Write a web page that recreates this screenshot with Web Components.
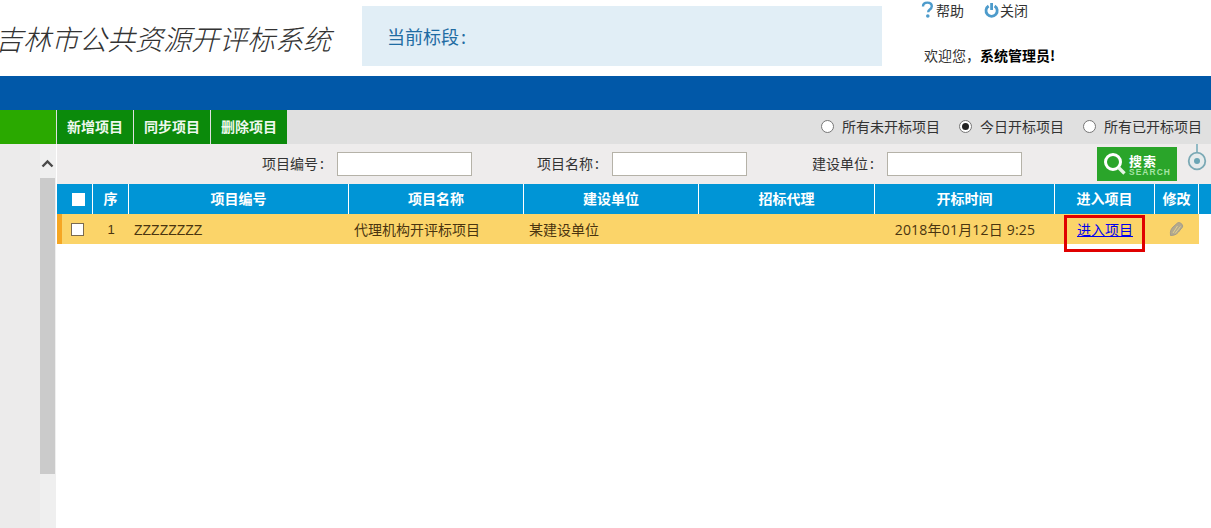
<!DOCTYPE html>
<html lang="zh">
<head>
<meta charset="utf-8">
<title>吉林市公共资源开评标系统</title>
<style>
    html, body {
        margin: 0;
        height: 100%;
        overflow: hidden;
        background: #fff;
        font-family: "Noto Sans CJK SC", sans-serif;
        font-size: 14px;
        color: #333;
    }
    body {
        display: flex;
        flex-direction: column;
    }
</style>
</head>
<body>
<app-header></app-header>
<tool-bar></tool-bar>
<work-area>
    <side-rail slot="rail"></side-rail>
    <search-bar></search-bar>
    <project-grid></project-grid>
</work-area>

<script>
class AppHeader extends HTMLElement {
    constructor() {
        super();
        this.attachShadow({ mode: 'open' });
        this.shadowRoot.innerHTML = `
            <style>
                :host { display: block; flex: none; }
                .top {
                    display: flex;
                    height: 76px;
                    background: #fff;
                }
                .title {
                    width: 362px;
                    flex: none;
                    margin-left: -5px;
                    font-size: 28px;
                    font-style: italic;
                    font-weight: 300;
                    line-height: 76px;
                    color: #333;
                    white-space: nowrap;
                }
                .current {
                    width: 520px;
                    height: 60px;
                    margin: 6px 0 0 5px;
                    padding-left: 25px;
                    box-sizing: border-box;
                    background: #e1eef6;
                    color: #1f6ca3;
                    font-size: 18px;
                    line-height: 60px;
                }
                .current s { text-decoration: none; margin-left: 2px; }
                .user {
                    margin-left: 42px;
                    font-size: 14px;
                    color: #333;
                }
                .links {
                    display: flex;
                    gap: 20px;
                    height: 22px;
                    align-items: center;
                    margin: -1px 0 23px -4px;
                }
                .links span {
                    display: flex;
                    align-items: center;
                }
                .welcome { line-height: 22px; }
                .welcome b { color: #000; }
                .bar { height: 34px; background: #0158a8; }
            </style>
            <div class="top">
                <div class="title">吉林市公共资源开评标系统</div>
                <div class="current">当前标段<s>:</s></div>
                <div class="user">
                    <div class="links">
                        <span>
                            <svg width="16" height="18" viewBox="0 0 16 18"><path d="M3 5.500C3 3 5 1.600 7.400 1.600c2.600 0 4.400 1.500 4.400 3.700 0 1.700-1 2.500-2.200 3.400-1 .8-1.400 1.300-1.400 2.600" fill="none" stroke="#4d9bcb" stroke-width="2.400"/><circle cx="7.800" cy="15" r="1.800" fill="#4d9bcb"/></svg>
                            <span>帮助</span>
                        </span>
                        <span>
                            <svg width="16" height="16" viewBox="0 0 16 16"><path d="M4.600 4a5.600 5.600 0 1 0 6 0" fill="none" stroke="#4d9bcb" stroke-width="2.800"/><path d="M7.600 1v7" stroke="#4d9bcb" stroke-width="2.800"/></svg>
                            <span>关闭</span>
                        </span>
                    </div>
                    <div class="welcome">欢迎您，<b>系统管理员!</b></div>
                </div>
            </div>
            <div class="bar"></div>
        `;
    }
}

class ToolBar extends HTMLElement {
    constructor() {
        super();
        this.attachShadow({ mode: 'open' });
        this.shadowRoot.innerHTML = `
            <style>
                :host {
                    display: flex;
                    flex: none;
                    height: 34px;
                    background: #e0e0e0;
                    align-items: stretch;
                }
                .lead { width: 56px; background: #2aa900; margin-right: 1px; }
                button {
                    width: 76px;
                    margin: 0 1px 0 0;
                    padding: 0 0 2px;
                    border: none;
                    background: #0b8a0b;
                    color: #eef8ee;
                    font: bold 14px "Noto Sans CJK SC", sans-serif;
                }
                button:nth-of-type(3) { margin-right: 0; }
                .filters {
                    margin-left: auto;
                    padding: 0 9px 2px 0;
                    display: flex;
                    align-items: center;
                    gap: 19px;
                    font-size: 14px;
                    color: #333;
                }
                label { display: flex; align-items: center; gap: 8px; }
                i {
                    width: 11px;
                    height: 11px;
                    border: 1px solid #767676;
                    border-radius: 50%;
                    background: #fff;
                    display: block;
                    position: relative;
                }
                i.on::after {
                    content: "";
                    position: absolute;
                    inset: 2px;
                    border-radius: 50%;
                    background: #222;
                }
            </style>
            <div class="lead"></div>
            <button>新增项目</button>
            <button>同步项目</button>
            <button>删除项目</button>
            <div class="filters">
                <label><i></i>所有未开标项目</label>
                <label><i class="on"></i>今日开标项目</label>
                <label><i></i>所有已开标项目</label>
            </div>
        `;
    }
}

class WorkArea extends HTMLElement {
    constructor() {
        super();
        this.attachShadow({ mode: 'open' });
        this.shadowRoot.innerHTML = `
            <style>
                :host {
                    display: flex;
                    flex: 1;
                    min-height: 0;
                }
                main { flex: 1; min-width: 0; }
            </style>
            <slot name="rail"></slot>
            <main><slot></slot></main>
        `;
    }
}

class SideRail extends HTMLElement {
    constructor() {
        super();
        this.attachShadow({ mode: 'open' });
        this.shadowRoot.innerHTML = `
            <style>
                :host {
                    display: flex;
                    justify-content: flex-end;
                    width: 56px;
                    margin-right: 1px;
                    height: 100%;
                    background: #ecebeb;
                }
                .track {
                    width: 16px;
                    background: #efefef;
                    display: flex;
                    flex-direction: column;
                    align-items: flex-start;
                }
                svg { display: block; margin: 15px 0 10px 1px; }
                .thumb { width: 15px; height: 296px; background: #cbcbcb; }
            </style>
            <div class="track">
                <svg width="13" height="9" viewBox="0 0 13 9"><path d="M1.500 7.500l5-5 5 5" fill="none" stroke="#4a4a4a" stroke-width="2.400"/></svg>
                <div class="thumb"></div>
            </div>
        `;
    }
}

class SearchBar extends HTMLElement {
    constructor() {
        super();
        this.attachShadow({ mode: 'open' });
        this.shadowRoot.innerHTML = `
            <style>
                :host {
                    display: flex;
                    align-items: center;
                    height: 40px;
                    background: #eeecec;
                    color: #333;
                    font-size: 14px;
                    position: relative;
                }
                label { display: flex; align-items: center; white-space: nowrap; }
                label:nth-of-type(1) { margin-left: 205px; }
                label:nth-of-type(2) { margin-left: 65px; }
                label:nth-of-type(3) { margin-left: 65px; }
                span { width: 75px; flex: none; padding-bottom: 2px; }
                s { text-decoration: none; margin-left: 2px; }
                input {
                    width: 135px;
                    height: 24px;
                    box-sizing: border-box;
                    margin: 0;
                    border: 1px solid #b5b2a8;
                    background: #fff;
                    outline: none;
                }
                button {
                    width: 80px;
                    height: 34px;
                    margin-left: 75px;
                    padding: 0;
                    border: none;
                    background: #2aa52a;
                    color: #fff;
                    display: flex;
                    align-items: center;
                    font-family: "Noto Sans CJK SC", sans-serif;
                }
                button svg { margin-left: 6px; flex: none; }
                .words {
                    margin-left: 2px;
                    padding-top: 2px;
                    display: flex;
                    flex-direction: column;
                    align-items: flex-start;
                }
                .cn { font-size: 13px; font-weight: bold; line-height: 13px; letter-spacing: 1px; padding-bottom: 1px; }
                .en {
                    font: bold 8.400px "Liberation Sans", sans-serif;
                    letter-spacing: 1.100px;
                    line-height: 8px;
                    color: #a6e6a6;
                }
                .pin { position: absolute; right: 4px; top: 0; display: block; }
            </style>
            <label><span>项目编号<s>:</s></span><input type="text"></label>
            <label><span>项目名称<s>:</s></span><input type="text"></label>
            <label><span>建设单位<s>:</s></span><input type="text"></label>
            <button>
                <svg width="24" height="24" viewBox="0 0 24 24"><circle cx="10" cy="10" r="7.500" fill="none" stroke="#fff" stroke-width="3"/><path d="M15.500 15.500l6 6" stroke="#e4f5e4" stroke-width="3.400"/></svg>
                <div class="words"><div class="cn">搜索</div><div class="en">SEARCH</div></div>
            </button>
            <svg class="pin" width="20" height="28" viewBox="0 0 20 28"><path d="M10 0v9" stroke="#6aa5b5" stroke-width="1.400"/><circle cx="10" cy="17" r="8.300" fill="#e6ebec" stroke="#7ba9b5" stroke-width="1.800"/><circle cx="10" cy="17" r="3" fill="#6aa5b5"/></svg>
        `;
    }
}

class ProjectGrid extends HTMLElement {
    constructor() {
        super();
        this.attachShadow({ mode: 'open' });
        this.shadowRoot.innerHTML = `
            <style>
                :host {
                    display: block;
                    position: relative;
                    --cols: 36px 36px 220px 175px 175px 176px 180px 100px 44px;
                }
                .row {
                    display: grid;
                    grid-template-columns: var(--cols);
                    height: 30px;
                    align-items: stretch;
                }
                .head {
                    background: #0095d6;
                    color: #fff;
                    font-weight: bold;
                }
                .head > div {
                    display: flex;
                    align-items: center;
                    justify-content: center;
                    border-right: 1px solid #fff;
                    box-sizing: border-box;
                    padding-bottom: 2px;
                }
                .head > div:first-child { padding: 0 0 0 7px; }
                .head i { border-color: #fff; }
                .body {
                    width: max-content;
                    background: #fbd469;
                    color: #4a3410;
                }
                .body > div {
                    display: flex;
                    align-items: center;
                    padding-left: 5px;
                }
                .body > .mid { justify-content: center; padding-left: 0; }
                .body > .first { border-left: 5px solid #f5a623; padding: 0; }
                .num { font-family: "Liberation Sans", sans-serif; font-size: 13px; }
                .zz { font-family: "Liberation Sans", sans-serif; padding-top: 2px; }
                .time { font-family: "Open Sans", "Noto Sans CJK SC", sans-serif; letter-spacing: .2px; }
                a { color: #0000ee; text-decoration: underline; }
                i {
                    display: block;
                    width: 11px;
                    height: 11px;
                    border: 1px solid #8a8a8a;
                    background: #fff;
                }
                .first i { margin-left: 9px; border-color: #7a6a50; }
                .mark {
                    position: absolute;
                    left: 1007px;
                    top: 31px;
                    width: 81px;
                    height: 37px;
                    box-sizing: border-box;
                    border: 3px solid #e00000;
                }
            </style>
            <div class="row head">
                <div><i></i></div>
                <div>序</div>
                <div>项目编号</div>
                <div>项目名称</div>
                <div>建设单位</div>
                <div>招标代理</div>
                <div>开标时间</div>
                <div>进入项目</div>
                <div>修改</div>
            </div>
            <div class="row body">
                <div class="first"><i></i></div>
                <div class="mid num">1</div>
                <div class="zz">ZZZZZZZZ</div>
                <div>代理机构开评标项目</div>
                <div>某建设单位</div>
                <div></div>
                <div class="mid time">2018年01月12日 9:25</div>
                <div class="mid"><a href="#">进入项目</a></div>
                <div class="mid">
                    <svg width="16" height="16" viewBox="0 0 16 16"><path d="M1.500 14.500C1 10 2 8 4 6L8.500 2c2-1.500 6 1.500 5 4L9.500 11c-2 2.500-4.500 3.500-8 3.500z" fill="#b3a98e" stroke="#a39c8a" stroke-width="1"/><path d="M4 12l4.500-7M6 12.500l5.500-7" stroke="#e6d490" stroke-width=".9"/></svg>
                </div>
            </div>
            <div class="mark"></div>
        `;
    }
}

customElements.define('app-header', AppHeader);
customElements.define('tool-bar', ToolBar);
customElements.define('work-area', WorkArea);
customElements.define('side-rail', SideRail);
customElements.define('search-bar', SearchBar);
customElements.define('project-grid', ProjectGrid);
</script>
</body>
</html>
